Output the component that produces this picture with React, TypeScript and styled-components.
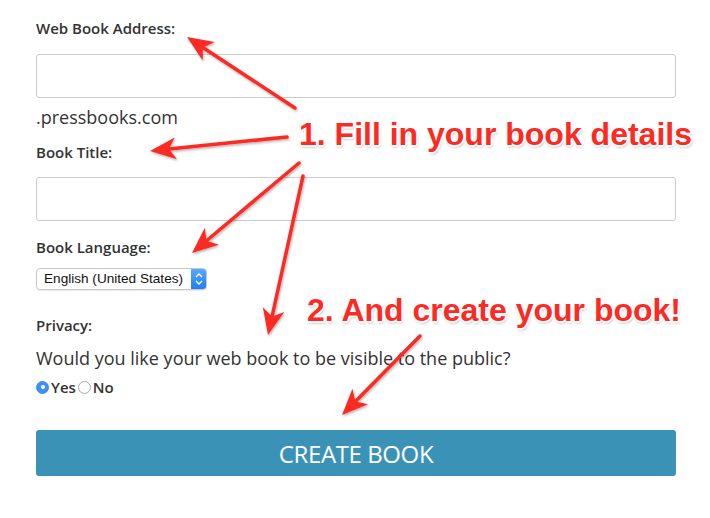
import * as React from 'react';
import styled, { createGlobalStyle } from 'styled-components';

const GlobalStyle = createGlobalStyle`
  html, body {
    margin: 0;
    padding: 0;
    background: #ffffff;
  }
  body {
    font-family: 'Open Sans', 'Noto Sans', sans-serif;
    color: #333333;
  }
`;

type Point = [number, number];

const arrows: { from: Point; to: Point }[] = [
  { from: [295, 108], to: [187, 37] },
  { from: [287, 137], to: [150, 151] },
  { from: [299, 163], to: [192, 253] },
  { from: [303, 176], to: [268, 335] },
  { from: [420, 336], to: [342, 415] },
];

const arrowParts = (from: Point, to: Point) => {
  const dx = to[0] - from[0];
  const dy = to[1] - from[1];
  const len = Math.hypot(dx, dy);
  const ux = dx / len;
  const uy = dy / len;
  const nx = -uy;
  const ny = ux;
  const L = 26;
  const W = 11;
  const notch = 19;
  const back: Point = [to[0] - L * ux, to[1] - L * uy];
  const mid: Point = [to[0] - notch * ux, to[1] - notch * uy];
  const head = [
    to,
    [back[0] + W * nx, back[1] + W * ny],
    mid,
    [back[0] - W * nx, back[1] - W * ny],
  ]
    .map((p) => p.join(','))
    .join(' ');
  return { lineEnd: mid, head };
};

const App = () => {
  return (
    <Page>
      <GlobalStyle />
      <Form>
        <Label>Web Book Address:</Label>
        <TextInput type="text" />
        <Suffix>.pressbooks.com</Suffix>
        <Label $gap={13}>Book Title:</Label>
        <TextInput type="text" $gap={15} />
        <Label $gap={16}>Book Language:</Label>
        <SelectBox>
          <SelectText>English (United States)</SelectText>
          <SelectButton>
            <svg width="8" height="14" viewBox="0 0 8 14">
              <path d="M1 5 L4 2 L7 5 M1 9 L4 12 L7 9" fill="none" stroke="#fff" strokeWidth="1.3" />
            </svg>
          </SelectButton>
        </SelectBox>
        <Label $gap={25}>Privacy:</Label>
        <Question>Would you like your web book to be visible to the public?</Question>
        <RadioRow>
          <Radio $checked />
          <RadioLabel>Yes</RadioLabel>
          <Radio />
          <RadioLabel>No</RadioLabel>
        </RadioRow>
        <CreateButton>CREATE BOOK</CreateButton>
      </Form>

      <ArrowLayer width="710" height="518" viewBox="0 0 710 518">
        <defs>
          <filter id="shadow" x="-20%" y="-20%" width="140%" height="140%">
            <feDropShadow dx="1" dy="1.5" stdDeviation="1" floodColor="#000" floodOpacity="0.3" />
          </filter>
        </defs>
        {arrows.map(({ from, to }, i) => {
          const { lineEnd, head } = arrowParts(from, to);
          return (
            <g key={i} filter="url(#shadow)">
              <line
                x1={from[0]}
                y1={from[1]}
                x2={lineEnd[0]}
                y2={lineEnd[1]}
                stroke="#fc2a24"
                strokeWidth="3.5"
                strokeLinecap="round"
              />
              <polygon points={head} fill="#fc2a24" />
            </g>
          );
        })}
      </ArrowLayer>

      <Callout $top={114} $left={299}>1. Fill in your book details</Callout>
      <Callout $top={290} $left={307}>2. And create your book!</Callout>
    </Page>
  );
};

export default App;

const Page = styled.div`
  position: relative;
  width: 710px;
  height: 518px;
  overflow: hidden;
`;

const Form = styled.div`
  display: flex;
  flex-direction: column;
  align-items: flex-start;
  padding: 18px 34px 0 36px;
`;

const Label = styled.div<{ $gap?: number }>`
  margin-top: ${(p) => p.$gap ?? 0}px;
  font-size: 15px;
  line-height: 20px;
  font-weight: 600;
  color: #333;
`;

const TextInput = styled.input<{ $gap?: number }>`
  box-sizing: border-box;
  width: 640px;
  height: 44px;
  margin: ${(p) => p.$gap ?? 16}px 0 0 0;
  border: 1px solid #cccccc;
  border-radius: 3px;
  background: #fff;
  outline: none;
`;

const Suffix = styled.div`
  margin-top: 7px;
  font-size: 18px;
  line-height: 24px;
  color: #333;
`;

const SelectBox = styled.div`
  display: flex;
  margin-top: 11px;
  width: 171px;
  height: 22px;
  box-sizing: border-box;
  border: 1px solid #c8c8c8;
  border-radius: 4px;
  overflow: hidden;
  box-shadow: 0 1px 1px rgba(0, 0, 0, 0.08);
`;

const SelectText = styled.div`
  flex: 1;
  padding-left: 7px;
  font-family: 'Liberation Sans', Arial, sans-serif;
  font-size: 13.6px;
  line-height: 20px;
  color: #111;
  white-space: nowrap;
`;

const SelectButton = styled.div`
  width: 15px;
  display: flex;
  align-items: center;
  justify-content: center;
  background: linear-gradient(#5aa6ff, #1f7ff0);
`;

const Question = styled.div`
  margin-top: 11px;
  font-size: 18px;
  line-height: 24px;
  color: #333;
`;

const RadioRow = styled.div`
  display: flex;
  align-items: center;
  margin-top: 7px;
  height: 20px;
`;

const Radio = styled.span<{ $checked?: boolean }>`
  box-sizing: border-box;
  width: 13px;
  height: 13px;
  border-radius: 50%;
  margin-right: 2px;
  display: inline-flex;
  align-items: center;
  justify-content: center;
  border: 1px solid ${(p) => (p.$checked ? '#3b8ff0' : '#a8a8a8')};
  background: ${(p) => (p.$checked ? '#3d91f2' : '#fff')};
  &::after {
    content: '';
    width: 4px;
    height: 4px;
    border-radius: 50%;
    background: #fff;
    display: ${(p) => (p.$checked ? 'block' : 'none')};
  }
`;

const RadioLabel = styled.span`
  font-size: 15px;
  font-weight: 600;
  color: #333;
  margin-right: 2px;
`;

const CreateButton = styled.button`
  margin-top: 33px;
  width: 640px;
  height: 46px;
  border: none;
  border-radius: 3px;
  background: #3a93b6;
  color: #fff;
  font-family: 'Open Sans', 'Noto Sans', sans-serif;
  font-size: 24px;
  letter-spacing: -0.4px;
  cursor: pointer;
`;

const ArrowLayer = styled.svg`
  position: absolute;
  left: 0;
  top: 0;
  pointer-events: none;
`;

const Callout = styled.div<{ $top: number; $left: number }>`
  position: absolute;
  top: ${(p) => p.$top}px;
  left: ${(p) => p.$left}px;
  font-family: 'Liberation Sans', Arial, sans-serif;
  font-weight: 700;
  font-size: 32px;
  line-height: 40px;
  color: #fc2a24;
  white-space: nowrap;
  text-shadow:
    -1px -1px 0 #fff, 1px -1px 0 #fff, -1px 1px 0 #fff, 1px 1px 0 #fff,
    0 -2px 0 #fff, 0 2px 0 #fff, -2px 0 0 #fff, 2px 0 0 #fff,
    1px 2px 3px rgba(0, 0, 0, 0.35);
`;
